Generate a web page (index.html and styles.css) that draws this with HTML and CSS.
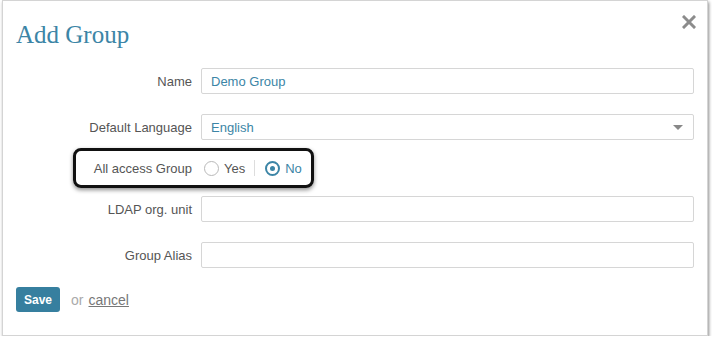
FILE: index.html
```html
<!DOCTYPE html>
<html lang="en">
<head>
    <meta charset="UTF-8">
    <meta name="viewport" content="width=device-width, initial-scale=1.0">
    <title>Add Group</title>
    <link rel="stylesheet" href="styles.css">
</head>
<body>
    <div class="dialog">
        <a class="close-button" href="#" title="Close">
            <svg width="14" height="14" viewBox="0 0 14 14">
                <path d="M2 2 L12 12 M12 2 L2 12" stroke="#8c8c8c" stroke-width="3" stroke-linecap="square"/>
            </svg>
        </a>
        <h1 class="dialog-title">Add Group</h1>

        <form class="group-form">
            <div class="field">
                <label class="field-label">Name</label>
                <input class="text-input" type="text" value="Demo Group">
            </div>

            <div class="field">
                <label class="field-label">Default Language</label>
                <div class="select-box">
                    <span>English</span>
                    <span class="select-arrow"></span>
                </div>
            </div>

            <div class="field radio-field">
                <label class="field-label">All access Group</label>
                <div class="radio-group">
                    <span class="radio first"></span>
                    <span class="radio-text">Yes</span>
                    <span class="radio-sep"></span>
                    <span class="radio checked"></span>
                    <span class="radio-text selected">No</span>
                </div>
                <div class="highlight-box"></div>
            </div>

            <div class="field">
                <label class="field-label">LDAP org. unit</label>
                <input class="text-input" type="text" value="">
            </div>

            <div class="field">
                <label class="field-label">Group Alias</label>
                <input class="text-input" type="text" value="">
            </div>

            <div class="actions">
                <button class="save-button" type="button">Save</button>
                <span class="or-text">or</span>
                <a class="cancel-link" href="#">cancel</a>
            </div>
        </form>
    </div>
</body>
</html>
```

FILE: styles.css
```css
body {
    margin: 0;
    background-color: #fff;
    font-family: "Liberation Sans", Arial, sans-serif;
}
.dialog {
    position: relative;
    width: 678px;
    margin-left: 2px;
    padding: 18px 13px 23px 13px;
    background-color: #fff;
    border: 1px solid #d4d4d4;
    box-shadow: 1px 2px 3px rgba(0,0,0,0.45);
}
.close-button {
    position: absolute;
    top: 14px;
    right: 11px;
    display: block;
    width: 14px;
    height: 14px;
}
.dialog-title {
    margin: 0 0 17px 0;
    font-family: "Liberation Serif", "Times New Roman", serif;
    font-weight: normal;
    font-size: 25px;
    line-height: 32px;
    color: #3c85a6;
}
.field {
    display: flex;
    align-items: center;
    margin-bottom: 20px;
}
.field-label {
    width: 176px;
    margin-right: 9px;
    text-align: right;
    font-size: 13px;
    color: #555;
}
.text-input,
.select-box {
    flex: 1;
    box-sizing: border-box;
    height: 26px;
    padding: 0 9px;
    border: 1px solid #d6d6d6;
    border-radius: 2px;
    font-family: "Liberation Sans", Arial, sans-serif;
    font-size: 13px;
    color: #3c85a6;
    background-color: #fff;
}
.select-box {
    display: flex;
    align-items: center;
    justify-content: space-between;
}
.select-arrow {
    width: 0;
    height: 0;
    margin-right: 1px;
    border-left: 5px solid transparent;
    border-right: 5px solid transparent;
    border-top: 5px solid #888;
}
.radio-field {
    position: relative;
    height: 16px;
}
.radio-group {
    display: flex;
    align-items: center;
    font-size: 13px;
}
.radio {
    box-sizing: border-box;
    width: 15px;
    height: 15px;
    border: 1px solid #b9b9b9;
    border-radius: 50%;
}
.radio.first {
    margin-left: 3px;
}
.radio.checked {
    border: 2px solid #3c85a6;
    position: relative;
}
.radio.checked::after {
    content: "";
    position: absolute;
    top: 3px;
    left: 3px;
    width: 5px;
    height: 5px;
    border-radius: 50%;
    background-color: #3c85a6;
}
.radio-text {
    margin-left: 5px;
    color: #555;
}
.radio-text.selected {
    color: #3c85a6;
}
.radio-sep {
    width: 1px;
    height: 16px;
    margin: 0 10px 0 9px;
    background-color: #ddd;
}
.highlight-box {
    position: absolute;
    top: -12px;
    left: 57px;
    width: 235px;
    height: 34px;
    border: 3px solid #111;
    border-radius: 8px;
    box-shadow: 0 2px 4px rgba(0,0,0,0.45);
}
.actions {
    display: flex;
    align-items: center;
    margin-top: -1px;
}
.save-button {
    height: 25px;
    padding: 0 8px;
    border: none;
    border-radius: 3px;
    background-color: #367f9f;
    color: #fff;
    font-family: "Liberation Sans", Arial, sans-serif;
    font-weight: bold;
    font-size: 12px;
}
.or-text {
    margin-left: 11px;
    font-size: 14px;
    color: #aaa;
}
.cancel-link {
    margin-left: 5px;
    font-size: 14px;
    color: #777;
}
```
